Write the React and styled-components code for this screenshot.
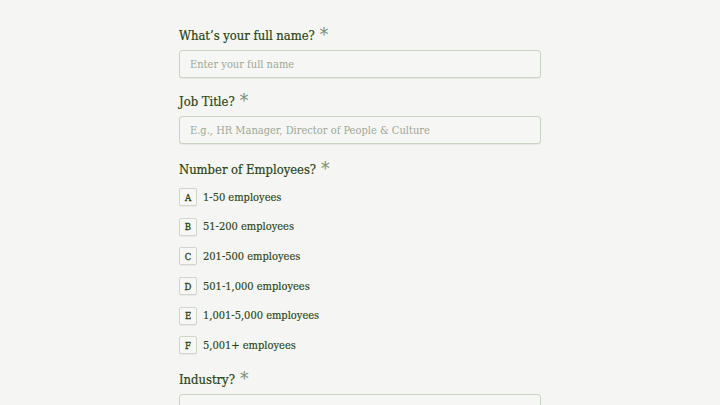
import React from 'react';
import styled, { createGlobalStyle } from 'styled-components';

const GlobalStyle = createGlobalStyle`
	html, body {
		margin: 0;
		padding: 0;
		background: #f5f5f3;
	}
	body {
		font-family: 'DejaVu Serif Condensed', 'DejaVu Serif', serif;
		font-stretch: condensed;
		color: #2a4515;
	}
`;

const sizes = [
	'1-50 employees',
	'51-200 employees',
	'201-500 employees',
	'501-1,000 employees',
	'1,001-5,000 employees',
	'5,001+ employees',
];

const App = () => {
	return (
		<>
			<GlobalStyle />
			<Page>
				<Form onSubmit={e => e.preventDefault()}>
					{/* --- name --- */}
					<Field>
						<Label>
							What’s your full name?<Required>*</Required>
						</Label>
						<TextInput type='text' placeholder='Enter your full name' />
					</Field>
					{/* --- job title --- */}
					<Field>
						<Label>
							Job Title?<Required>*</Required>
						</Label>
						<TextInput
							type='text'
							placeholder='E.g., HR Manager, Director of People & Culture'
						/>
					</Field>
					{/* --- employees --- */}
					<Field $top={2}>
						<Label>
							Number of Employees?<Required>*</Required>
						</Label>
						<Options>
							{sizes.map((s, idx) => (
								<Option key={idx}>
									<KeyBox>{String.fromCharCode(65 + idx)}</KeyBox>
									<OptionText>{s}</OptionText>
								</Option>
							))}
						</Options>
					</Field>
					{/* --- industry --- */}
					<Field $top={2}>
						<Label>
							Industry?<Required>*</Required>
						</Label>
						<Select>
							<Chevron viewBox='0 0 12 12'>
								<path d='M3 4.5 6 7.5 9 4.5' fill='none' stroke='#b9c2b0' strokeWidth='1.2' />
							</Chevron>
						</Select>
					</Field>
				</Form>
			</Page>
		</>
	);
};

const Page = styled.div`
	width: 720px;
	height: 405px;
	overflow: hidden;
	display: flex;
	justify-content: flex-start;
	padding-left: 179px;
	padding-top: 26px;
	box-sizing: border-box;
`;

const Form = styled.form`
	width: 362px;
	display: flex;
	flex-direction: column;
	gap: 14px;
`;

const Field = styled.div`
	display: flex;
	flex-direction: column;
	margin-top: ${p => p.$top || 0}px;
`;

const Label = styled.label`
	font-size: 12.9px;
	line-height: 20px;
	color: #2a4515;
	margin-bottom: 4px;
	display: flex;
	align-items: flex-start;
	-webkit-text-stroke: 0.2px #2a4515;
`;

const Required = styled.span`
	color: #7d8f70;
	font-size: 19px;
	line-height: 16px;
	margin-left: 5px;
	-webkit-text-stroke: 0;
`;

const TextInput = styled.input`
	box-sizing: border-box;
	width: 100%;
	height: 28px;
	padding: 0 10px;
	font-family: inherit;
	font-stretch: inherit;
	font-size: 11px;
	color: #2a4515;
	background: #f6f6f4;
	border: 1px solid #c9d3c1;
	border-radius: 3px;
	box-shadow: 0 1px 1px rgba(0, 0, 0, 0.06);
	outline: none;
	&::placeholder {
		color: #9ea896;
	}
`;

const Options = styled.div`
	display: flex;
	flex-direction: column;
	gap: 11.7px;
	margin-top: 4px;
`;

const Option = styled.div`
	display: flex;
	align-items: center;
	gap: 6px;
	cursor: pointer;
`;

const KeyBox = styled.span`
	box-sizing: border-box;
	width: 18px;
	height: 18px;
	display: flex;
	align-items: center;
	justify-content: center;
	font-size: 9.5px;
	color: #2a4515;
	-webkit-text-stroke: 0.3px #2a4515;
	background: #f7f7f5;
	border: 1px solid #cfd6ca;
	border-radius: 2px;
	box-shadow: 0 1px 1px rgba(0, 0, 0, 0.05);
`;

const OptionText = styled.span`
	font-size: 11px;
	color: #2a4515;
	-webkit-text-stroke: 0.15px #2a4515;
`;

const Select = styled.div`
	position: relative;
	box-sizing: border-box;
	height: 28px;
	border: 1px solid #c9d3c1;
	border-radius: 3px;
	background: #f6f6f4;
`;

const Chevron = styled.svg`
	position: absolute;
	right: 10px;
	top: 7px;
	width: 12px;
	height: 12px;
`;

export default App;
